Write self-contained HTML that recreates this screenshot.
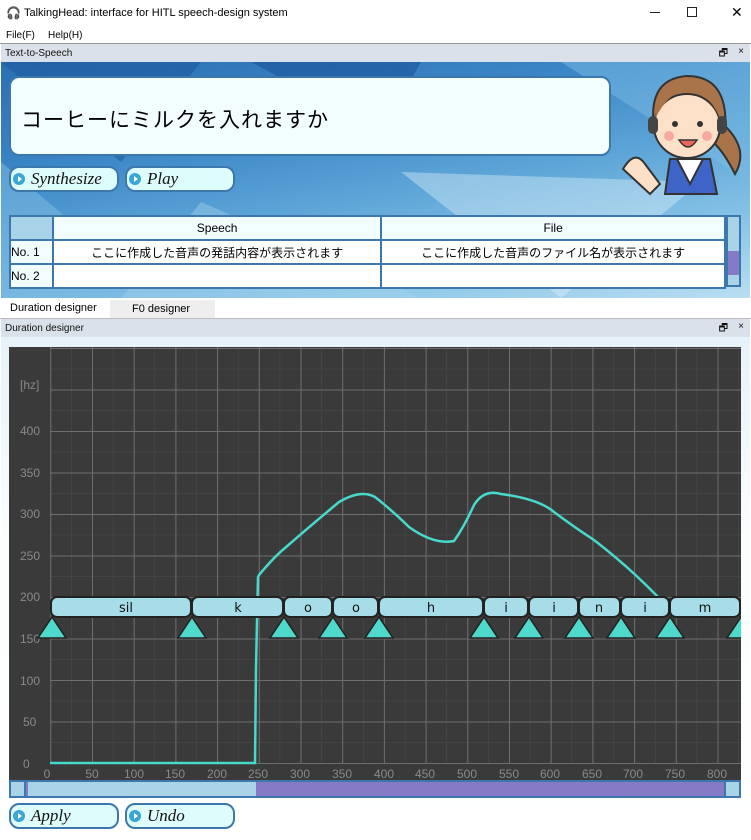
<!DOCTYPE html>
<html><head><meta charset="utf-8">
<style>
*{margin:0;padding:0;box-sizing:border-box}
body{width:751px;height:840px;overflow:hidden;font-family:"Liberation Sans","Noto Sans CJK JP",sans-serif;background:#fff;position:relative}
.abs{position:absolute}
.title{left:0;top:0;width:751px;height:28px;background:#fff;font-size:11px}
.menu{top:28px;left:0;width:751px;height:16px;font-size:10px}
.bar{left:1px;width:749px;height:18px;background:#dbe1ea;font-size:10px;color:#111;padding:4px 4px}
.bg{background:linear-gradient(170deg,#2a6fb3 0%,#3b86c6 30%,#5ea6d8 55%,#8cc6e8 80%,#b9def2 100%)}
.btn{height:26px;border:2px solid #3d78ad;border-radius:10px;background:#dffcfd;font-family:"Liberation Serif",serif;font-style:italic;font-size:17px;color:#111;padding-left:20px;line-height:22px}
.btn:before{content:"";position:absolute;left:2px;top:5px;width:12px;height:12px;border-radius:50%;background:#3aa6d6}
.btn:after{content:"";position:absolute;left:7px;top:8px;border-left:4px solid #fff;border-top:3px solid transparent;border-bottom:3px solid transparent}
table{border-collapse:collapse}
td{border:2px solid #3d78ad;font-size:12px;text-align:center;height:24px;background:#fff}
</style></head><body>
<div class="abs title">
 <span class="abs" style="left:6px;top:6px;font-size:12px">🎧</span>
 <span class="abs" style="left:24px;top:7px">TalkingHead: interface for HITL speech-design system</span>
 <span class="abs" style="left:650px;top:12px;width:10px;height:1px;background:#222"></span>
 <span class="abs" style="left:687px;top:7px;width:10px;height:10px;border:1px solid #222"></span>
 <span class="abs" style="left:731px;top:4px;font-size:14px">✕</span>
</div>
<div class="abs menu"><span class="abs" style="left:6px;top:2px">File(F)</span><span class="abs" style="left:48px;top:2px">Help(H)</span></div>
<div class="abs" style="left:0;top:43px;width:751px;height:1px;background:#999"></div>
<div class="abs bar" style="top:44px">Text-to-Speech<span class="abs" style="right:22px;top:2px">🗗</span><span class="abs" style="right:6px;top:2px">×</span></div>
<div class="abs bg" style="left:1px;top:62px;width:749px;height:236px;overflow:hidden">
 <svg class="abs" width="749" height="236" style="left:0;top:0">
  <polygon points="0,0 200,0 120,100" fill="#1a5499" opacity=".5"/>
  <polygon points="250,0 420,0 380,70" fill="#1a5499" opacity=".6"/>
  <polygon points="400,110 560,236 700,120" fill="#e0f2fb" opacity=".4"/>
  <polygon points="0,100 160,236 0,236" fill="#7fbde3" opacity=".5"/>
  <polygon points="200,140 420,236 120,236" fill="#a8d4ee" opacity=".4"/>
  <polygon points="560,0 749,0 749,120" fill="#7cbce3" opacity=".5"/>
 </svg>
</div>
<div class="abs" style="left:9px;top:76px;width:602px;height:80px;border:2px solid #3d78ad;border-radius:10px;background:#f1fdff;font-size:21px;padding:26px 10px;letter-spacing:1px">コーヒーにミルクを入れますか</div>
<svg class="abs" style="left:615px;top:64px" width="136" height="134">
 <path d="M40 70 Q30 15 72 12 Q115 12 110 70 Z" fill="#a9744a" stroke="#333" stroke-width="2"/>
 <path d="M108 60 Q135 85 120 110 Q110 90 100 80Z" fill="#a9744a" stroke="#333" stroke-width="2"/>
 <path d="M50 130 L55 95 L95 95 L102 130Z" fill="#3f64c8" stroke="#333" stroke-width="2"/>
 <path d="M62 95 L75 120 L88 95Z" fill="#fff" stroke="#333" stroke-width="2"/>
 <ellipse cx="72" cy="62" rx="33" ry="32" fill="#fde0c8" stroke="#333" stroke-width="2"/>
 <path d="M40 55 Q55 25 72 28 Q95 28 105 55 Q100 25 72 20 Q42 22 40 55Z" fill="#a9744a"/>
 <circle cx="60" cy="60" r="3" fill="#333"/><circle cx="85" cy="60" r="3" fill="#333"/>
 <circle cx="54" cy="72" r="5" fill="#f7a9a0"/><circle cx="92" cy="72" r="5" fill="#f7a9a0"/>
 <path d="M64 76 Q73 90 82 76Z" fill="#e8665a" stroke="#333" stroke-width="1.5"/>
 <rect x="33" y="52" width="10" height="18" rx="5" fill="#444"/><rect x="102" y="52" width="10" height="18" rx="5" fill="#444"/>
 <path d="M8 105 Q20 85 30 100 L45 120 L35 130 Z" fill="#fde0c8" stroke="#333" stroke-width="2"/>
</svg>
<div class="abs btn" style="left:9px;top:166px;width:110px">Synthesize</div>
<div class="abs btn" style="left:125px;top:166px;width:110px">Play</div>
<table class="abs" style="left:9px;top:215px;width:717px">
 <tr><td style="width:43px;background:#a9d4e8"></td><td style="background:#f1fdff">Speech</td><td style="background:#f1fdff">File</td></tr>
 <tr><td style="text-align:left;background:#f1fdff">No. 1</td><td>ここに作成した音声の発話内容が表示されます</td><td>ここに作成した音声のファイル名が表示されます</td></tr>
 <tr><td style="text-align:left;background:#f1fdff">No. 2</td><td></td><td></td></tr>
</table>
<div class="abs" style="left:726px;top:215px;width:15px;height:72px;border:2px solid #3d78ad;background:#a9d4e8"><div class="abs" style="left:0;top:34px;width:11px;height:24px;background:#8679c6"></div></div>
<div class="abs" style="left:0;top:298px;width:110px;height:20px;background:#fff;font-size:11px;padding:4px 10px">Duration designer</div>
<div class="abs" style="left:110px;top:300px;width:105px;height:18px;background:#eee;font-size:11px;padding:3px 22px">F0 designer</div>
<div class="abs" style="left:0;top:318px;width:751px;height:1px;background:#bbb"></div>
<div class="abs bar" style="top:319px">Duration designer<span class="abs" style="right:22px;top:2px">🗗</span><span class="abs" style="right:6px;top:2px">×</span></div>
<div class="abs" style="left:1px;top:337px;width:749px;height:502px;background:linear-gradient(#e6f2f9,#fbfdfe 40%,#fff)"></div>
<svg class="abs" style="left:9px;top:347px" width="732" height="433">
 <defs>
  <pattern id="mn" width="20.85" height="20.75" patternUnits="userSpaceOnUse" x="41.3" y="416">
   <path d="M0 0V20.75M0 0H20.85" stroke="#4c4c4c" stroke-width="1" fill="none"/></pattern>
  <pattern id="mj" width="41.7" height="41.5" patternUnits="userSpaceOnUse" x="41.3" y="416">
   <path d="M0 0V41.5M0 0H41.7" stroke="#6e6e6e" stroke-width="2" fill="none"/></pattern>
 </defs>
 <rect width="732" height="433" fill="#3a3a3a"/>
 <rect x="41" y="0" width="691" height="417" fill="url(#mn)"/>
 <rect x="41" y="0" width="691" height="417" fill="url(#mj)"/>
 <g font-family="Liberation Sans" font-size="12" fill="#8a8a8a">
  <text x="11" y="42">[hz]</text>
  <text x="11" y="88">400</text><text x="11" y="130">350</text><text x="11" y="171">300</text><text x="11" y="213">250</text><text x="11" y="254">200</text><text x="11" y="296">150</text><text x="11" y="338">100</text><text x="14" y="379">50</text><text x="14" y="421">0</text>
  <g text-anchor="middle"><text x="38" y="431">0</text><text x="83" y="431">50</text><text x="125" y="431">100</text><text x="166" y="431">150</text><text x="208" y="431">200</text><text x="249" y="431">250</text><text x="291" y="431">300</text><text x="333" y="431">350</text><text x="375" y="431">400</text><text x="416" y="431">450</text><text x="458" y="431">500</text><text x="500" y="431">550</text><text x="541" y="431">600</text><text x="583" y="431">650</text><text x="624" y="431">700</text><text x="666" y="431">750</text><text x="708" y="431">800</text></g>
 </g>
 <path d="M41 416 H246 L247 320 L249 230 L250 228 Q265 210 276 201 Q300 180 330 155 Q352 142 366 150 Q385 165 400 180 Q425 198 445 194 Q455 180 465 158 Q475 142 492 147 Q530 152 545 165 Q565 180 585 193 Q620 220 649 250" stroke="#46d9cc" stroke-width="2.5" fill="none"/>
 <g stroke="#222" stroke-width="2" fill="#a7dde9">
  <rect x="42" y="250" width="140" height="20" rx="6"/><rect x="183" y="250" width="91" height="20" rx="6"/><rect x="275" y="250" width="48" height="20" rx="6"/><rect x="324" y="250" width="45" height="20" rx="6"/><rect x="370" y="250" width="104" height="20" rx="6"/><rect x="475" y="250" width="44" height="20" rx="6"/><rect x="520" y="250" width="49" height="20" rx="6"/><rect x="570" y="250" width="41" height="20" rx="6"/><rect x="612" y="250" width="48" height="20" rx="6"/><rect x="661" y="250" width="70" height="20" rx="6"/><rect x="732" y="250" width="20" height="20" rx="6"/>
 </g>
 <g font-family="DejaVu Sans" font-size="13" fill="#111" text-anchor="middle">
  <text x="117" y="265">sil</text><text x="229" y="265">k</text><text x="299" y="265">o</text><text x="347" y="265">o</text><text x="422" y="265">h</text><text x="497" y="265">i</text><text x="545" y="265">i</text><text x="590" y="265">n</text><text x="636" y="265">i</text><text x="696" y="265">m</text>
 </g>
 <g fill="#4fd8cc" stroke="#222" stroke-width="1.5">
  <path d="M43 270 L29 291 H57Z"/><path d="M183 270 L169 291 H197Z"/><path d="M275 270 L261 291 H289Z"/><path d="M324 270 L310 291 H338Z"/><path d="M370 270 L356 291 H384Z"/><path d="M475 270 L461 291 H489Z"/><path d="M520 270 L506 291 H534Z"/><path d="M570 270 L556 291 H584Z"/><path d="M612 270 L598 291 H626Z"/><path d="M661 270 L647 291 H675Z"/><path d="M732 270 L718 291 H746Z"/>
 </g>
</svg>
<div class="abs" style="left:9px;top:780px;width:732px;height:18px;border:2px solid #3d78ad;background:#8679c6">
 <div class="abs" style="left:0;top:0;width:15px;height:14px;background:#a9d4e8;border-right:2px solid #3d78ad"></div>
 <div class="abs" style="left:17px;top:0;width:228px;height:14px;background:#a9d4e8"></div>
 <div class="abs" style="right:0;top:0;width:15px;height:14px;background:#a9d4e8;border-left:2px solid #3d78ad"></div>
</div>
<div class="abs btn" style="left:9px;top:803px;width:110px">Apply</div>
<div class="abs btn" style="left:125px;top:803px;width:110px">Undo</div>
</body></html>
